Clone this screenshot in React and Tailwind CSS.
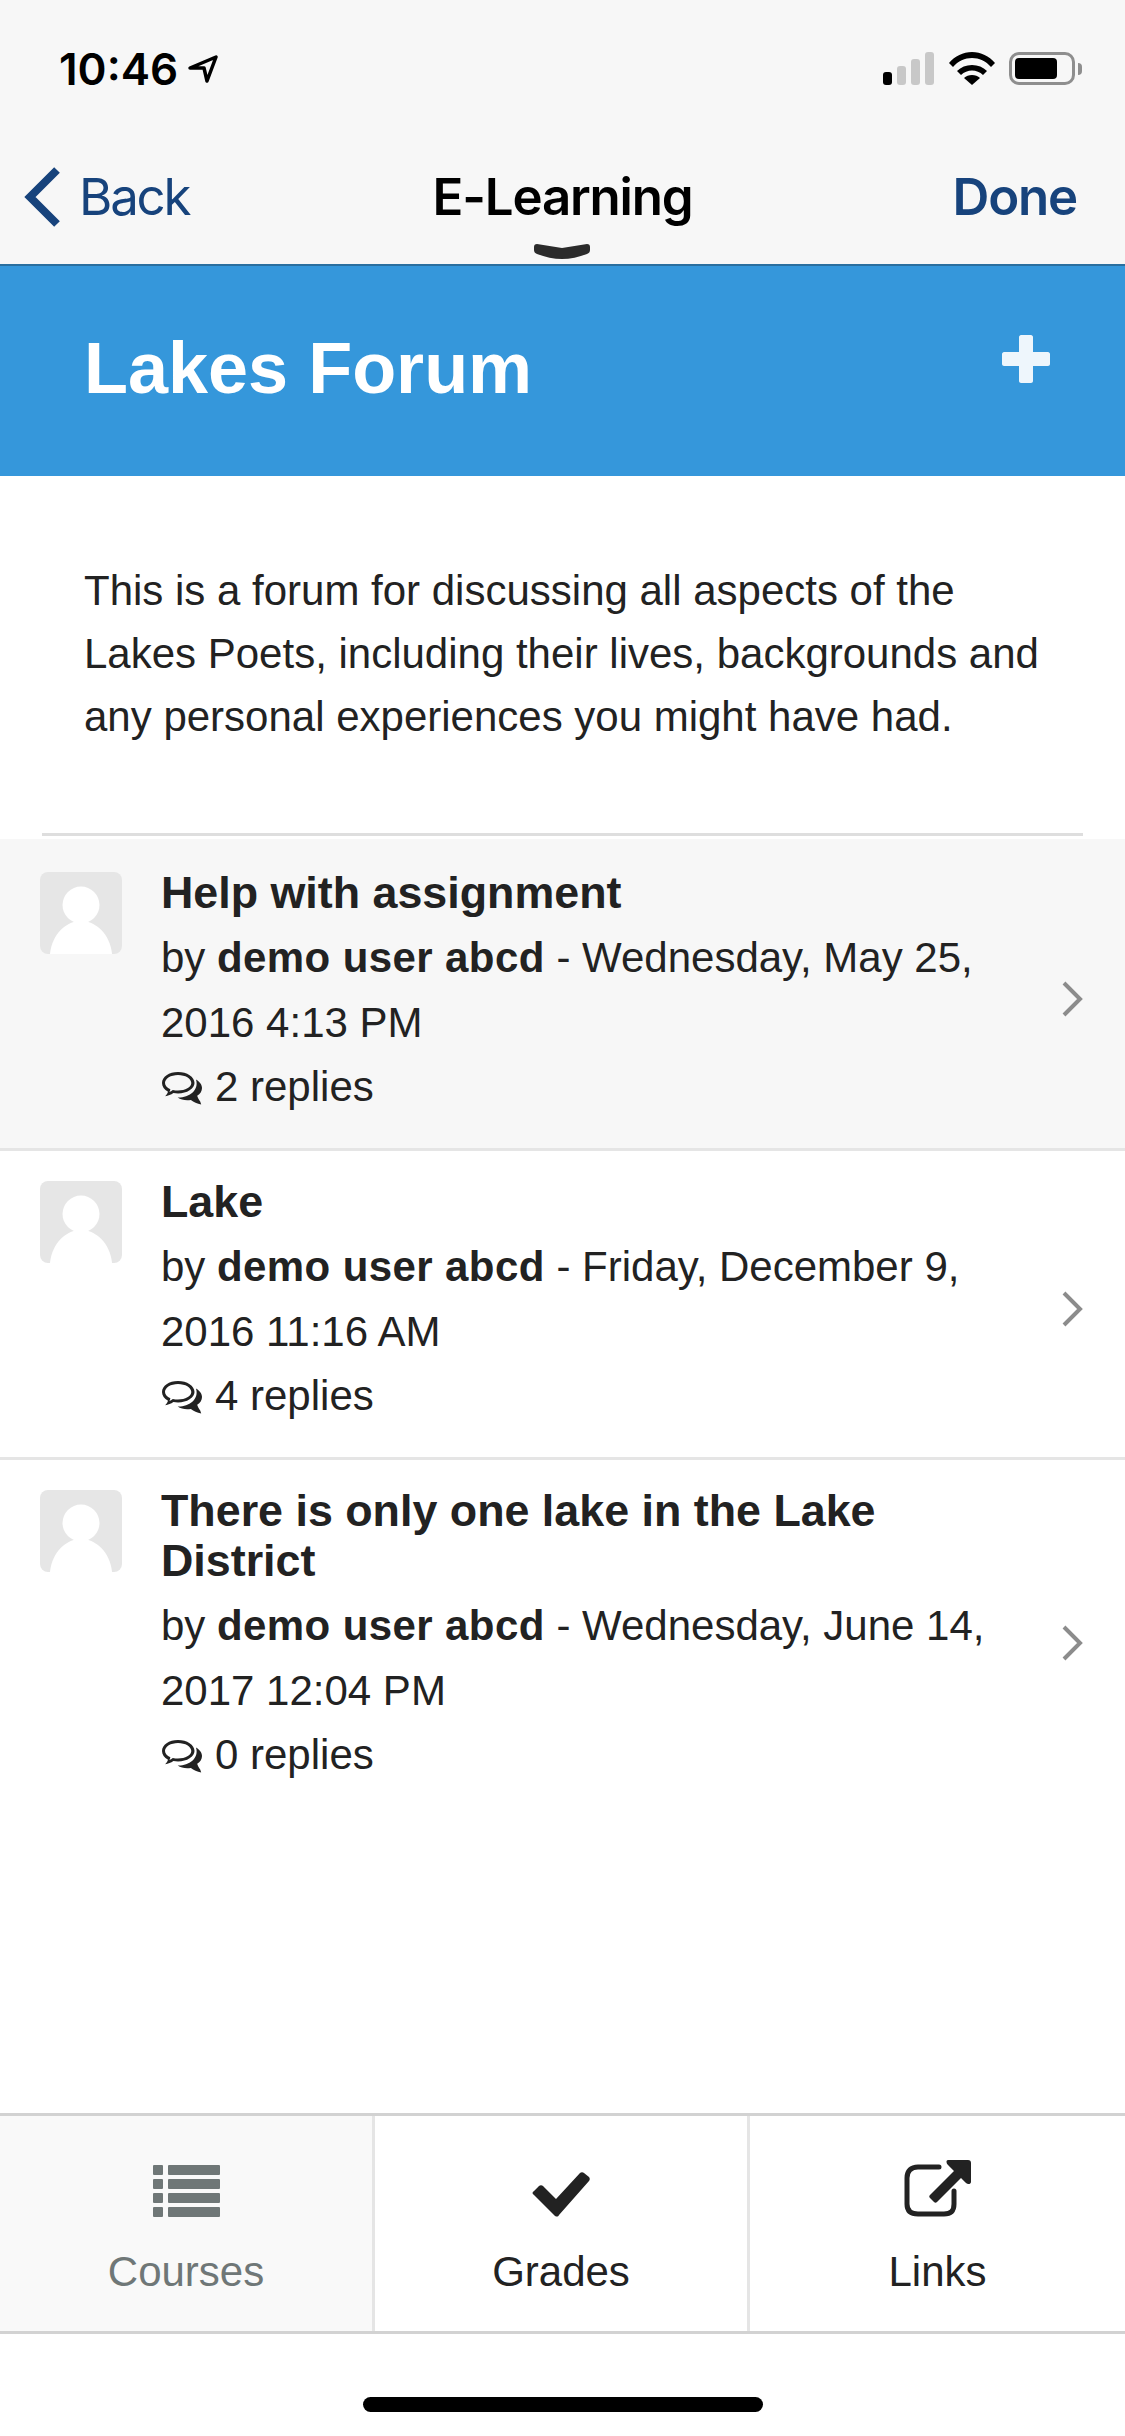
import React from 'react';

const sans = "font-['Liberation_Sans',Arial,sans-serif]";

const Avatar = () => (
  <svg viewBox="0 0 82 82" className="w-[82px] h-[82px] shrink-0">
    <rect width="82" height="82" rx="8" fill="#e6e6e6" />
    <circle cx="41" cy="33" r="18.5" fill="#fff" />
    <path d="M10 82C12 62 26 49 41 49s29 13 31 33z" fill="#fff" />
  </svg>
);

const CommentsIcon = () => (
  <svg viewBox="0 0 42 36" className="w-[42px] h-[36px] shrink-0 mt-[5px]" fill="#222">
    <path fillRule="evenodd" d="M17 1C8 1 1 5.800 1 12c0 3.500 2.300 6.700 6 8.800-.4 1.500-1.300 3-2.800 4.400 3-.3 5.800-1.500 8.200-3.200 1.500.3 3 .4 4.600.4 9 0 16.500-4.600 16.500-10.400C33.500 5.800 26 1 17 1zm0 3c7.300 0 13.300 3.600 13.300 8 0 4.300-6 7.500-13.300 7.500-1.800 0-3.400-.2-5.200-.6-1.200.9-2.300 1.600-3.400 2.100.4-.9.800-1.800 1-2.800C6 17 4 14.500 4 12c0-4.400 5.800-8 13-8z" />
    <path d="M35 8.500C38.500 10.500 41 13.500 41 17c0 3.200-1.800 6-4.800 7.800.4 1.800 1.500 3.700 3 5.700l1 3c-4-.8-7.600-2.400-10.300-4.600-1.300.2-2.500.3-3.700.3-3.500 0-7-1-9.500-2.700C27 27 38.500 20 35 8.500z" />
  </svg>
);

const RowChevron = () => (
  <svg viewBox="0 0 22 36" className="w-[22px] h-[36px] shrink-0" fill="none" stroke="#8c8c8c" strokeWidth="4">
    <path d="M3 2l16 16L3 34" />
  </svg>
);

const discussions = [
  { title: 'Help with assignment', date: 'Wednesday, May 25,', time: '2016 4:13 PM', replies: '2 replies', bg: 'bg-[#f7f7f7]', pt: 'pt-[33px]', border: 'border-b-[3px]' },
  { title: 'Lake', date: 'Friday, December 9,', time: '2016 11:16 AM', replies: '4 replies', bg: 'bg-white', pt: 'pt-[30px]', border: 'border-b-[3px]' },
  { title: 'There is only one lake in the Lake District', date: 'Wednesday, June 14,', time: '2017 12:04 PM', replies: '0 replies', bg: 'bg-white', pt: 'pt-[30px]', border: '' },
];

const App = () => {
  return (
    <div className={`w-[1125px] h-[2436px] flex flex-col bg-white text-[#222] ${sans}`}>
      {/* Status bar + nav */}
      <header className="bg-[#f7f7f7] h-[264px] shrink-0 flex flex-col font-['Inter',sans-serif]">
        <div className="h-[166px] flex items-start justify-between pt-[44px] pl-[59px] pr-[43px]">
          <div className="flex items-center gap-[10px] text-black">
            <span className="text-[44px] leading-[50px] font-semibold">10:46</span>
            <svg viewBox="0 0 30 28" className="w-[30px] h-[28px]" fill="none" stroke="#000" strokeWidth="3.500" strokeLinejoin="round">
              <path d="M2 13L28 2 19 26l-3-13z" />
            </svg>
          </div>
          <div className="flex items-start gap-[14px] pt-[8px]">
            <svg viewBox="0 0 52 33" className="w-[52px] h-[33px]">
              <rect x="0" y="20" width="9" height="13" rx="3" fill="#000" />
              <rect x="14" y="14" width="9" height="19" rx="3" fill="#c8c8c8" />
              <rect x="28" y="7" width="9" height="26" rx="3" fill="#c8c8c8" />
              <rect x="42" y="0" width="9" height="33" rx="3" fill="#c8c8c8" />
            </svg>
            <svg viewBox="0 0 46 33" className="w-[46px] h-[33px]">
              <path d="M0 11C6 4 14 0 23 0s17 4 23 11l-4 4C37 9 30 6 23 6S9 9 4 15z" fill="#000" />
              <path d="M8 19c4-4 9-6 15-6s11 2 15 6l-4 4c-3-3-7-4.500-11-4.500S15 20 12 23z" fill="#000" />
              <path d="M15 26c2-2 5-3 8-3s6 1 8 3l-8 7z" fill="#000" />
            </svg>
            <div className="flex items-center gap-[3px]">
              <div className="w-[66px] h-[33px] rounded-[10px] border-[3px] border-[#8e8e8e] p-[3px] pr-[15px]">
                <div className="w-full h-full rounded-[4px] bg-black" />
              </div>
              <div className="w-[4px] h-[12px] rounded-r-full bg-[#8e8e8e]" />
            </div>
          </div>
        </div>
        <nav className="relative grid grid-cols-3 items-center h-[62px] px-[24px] text-[51px] leading-[62px]">
          <div className="flex items-center gap-[18px] text-[#17437c] tracking-[-2.200px]">
            <svg viewBox="0 0 37 60" className="w-[37px] h-[60px]" fill="none" stroke="#17437c" strokeWidth="8">
              <path d="M33 3L6 30l27 27" />
            </svg>
            <span>Back</span>
          </div>
          <div className="text-center font-semibold text-black tracking-[-1.2px] whitespace-nowrap">E-Learning</div>
          <div className="text-right font-semibold text-[#17437c] tracking-[-1.2px] pr-[24px]">Done</div>
          <svg viewBox="0 0 56 15" className="absolute left-[534px] top-[78px] w-[56px] h-[15px]" fill="#2b2b2b">
            <path d="M0 3C0 1 1 0 3 0l25 4L53 0c2 0 3 1 3 3v3c0 2-1 3-3 4-8 3-17 5-25 5S11 13 3 10C1 9 0 8 0 6z" />
          </svg>
        </nav>
      </header>

      {/* Forum title */}
      <div className="bg-[#3597db] border-t-2 border-[#2a6f9f] h-[212px] shrink-0 flex items-center justify-between pl-[84px] pr-[75px]">
        <h1 className="text-[72px] leading-[80px] font-bold text-white -mt-[6px]">Lakes Forum</h1>
        <svg viewBox="0 0 48 48" className="w-[48px] h-[48px] -mt-[24px]" fill="#eef6fc">
          <path d="M17 2c0-1 1-2 2-2h10c1 0 2 1 2 2v15h15c1 0 2 1 2 2v10c0 1-1 2-2 2H31v15c0 1-1 2-2 2H19c-1 0-2-1-2-2V31H2c-1 0-2-1-2-2V19c0-1 1-2 2-2h15z" />
        </svg>
      </div>

      {/* Description */}
      <p className="pt-[83px] pb-[85px] pl-[84px] pr-[40px] text-[42px] leading-[63px] text-[#222]">
        This is a forum for discussing all aspects of the<br />
        Lakes Poets, including their lives, backgrounds and<br />
        any personal experiences you might have had.
      </p>
      <div className="mx-[42px] h-[3px] bg-[#dedede] mb-[3px]" />

      {/* Discussions */}
      <ul className="flex-1">
        {discussions.map((d) => (
          <li key={d.title} className={`flex items-center ${d.bg} ${d.border} border-[#e5e5e5]`}>
            <div className={`flex-1 flex gap-[39px] pl-[40px] ${d.pt} pb-[28px]`}>
              <Avatar />
              <div className="-mt-[5px] w-[860px] text-[42px] leading-[65px]">
                <div className="text-[44.8px] leading-[50px] font-bold mb-[8px] max-w-[760px]">{d.title}</div>
                <div className="whitespace-nowrap">by <b className="tracking-[0.4px]">demo user abcd</b> - {d.date}</div>
                <div>{d.time}</div>
                <div className="flex items-center gap-[12px] -mt-[1px] mb-[1px]">
                  <CommentsIcon />
                  <span>{d.replies}</span>
                </div>
              </div>
            </div>
            <div className="pr-[42px] pt-[10px]">
              <RowChevron />
            </div>
          </li>
        ))}
      </ul>

      {/* Tabs */}
      <div className="grid grid-cols-3 h-[221px] shrink-0 border-y-[3px] border-[#d2d2d2] text-[42px] leading-[50px]">
        <div className="bg-[#f9f9f9] border-r-[3px] border-[#e5e5e5] flex flex-col items-center pt-[49px] text-[#6f7777]">
          <svg viewBox="0 0 67 52" className="w-[67px] h-[52px]" fill="#6f7777">
            <rect x="0" y="0" width="10" height="10" rx="1" />
            <rect x="15" y="0" width="52" height="10" rx="1" />
            <rect x="0" y="14" width="10" height="10" rx="1" />
            <rect x="15" y="14" width="52" height="10" rx="1" />
            <rect x="0" y="28" width="10" height="10" rx="1" />
            <rect x="15" y="28" width="52" height="10" rx="1" />
            <rect x="0" y="42" width="10" height="10" rx="1" />
            <rect x="15" y="42" width="52" height="10" rx="1" />
          </svg>
          <span className="mt-[30px]">Courses</span>
        </div>
        <div className="border-r-[3px] border-[#e5e5e5] flex flex-col items-center pt-[49px]">
          <svg viewBox="0 0 58 52" className="w-[58px] h-[52px]" fill="#222">
            <path d="M48 8c1-1 3-1 4 0l5 4c1 1 1 3 0 4L27 50c-1 2-3 2-5 0L2 30c-2-1-2-3 0-4l5-5c1-1 3-1 4 0l13 13z" />
          </svg>
          <span className="mt-[30px]">Grades</span>
        </div>
        <div className="flex flex-col items-center pt-[42px]">
          <svg viewBox="0 0 68 60" className="w-[68px] h-[60px] -ml-[2px]">
            <path d="M36 9H15C8 9 4 13 4 20v26c0 7 4 10 11 10h26c7 0 10-3 10-10V33" fill="none" stroke="#222" strokeWidth="5" strokeLinecap="round" />
            <path d="M45 2h20c2 0 3 1 3 3v19c0 2-3 3-5 1l-5-5-24 24c-1 1-2 1-3 0l-4-4c-1-1-1-2 0-3l24-24-6-6c-2-2-2-5 0-5z" fill="#222" />
          </svg>
          <span className="mt-[29px]">Links</span>
        </div>
      </div>

      {/* Home indicator */}
      <div className="h-[102px] shrink-0 flex justify-center pt-[63px]">
        <div className="w-[400px] h-[15px] rounded-full bg-black" />
      </div>
    </div>
  );
};

export default App;
